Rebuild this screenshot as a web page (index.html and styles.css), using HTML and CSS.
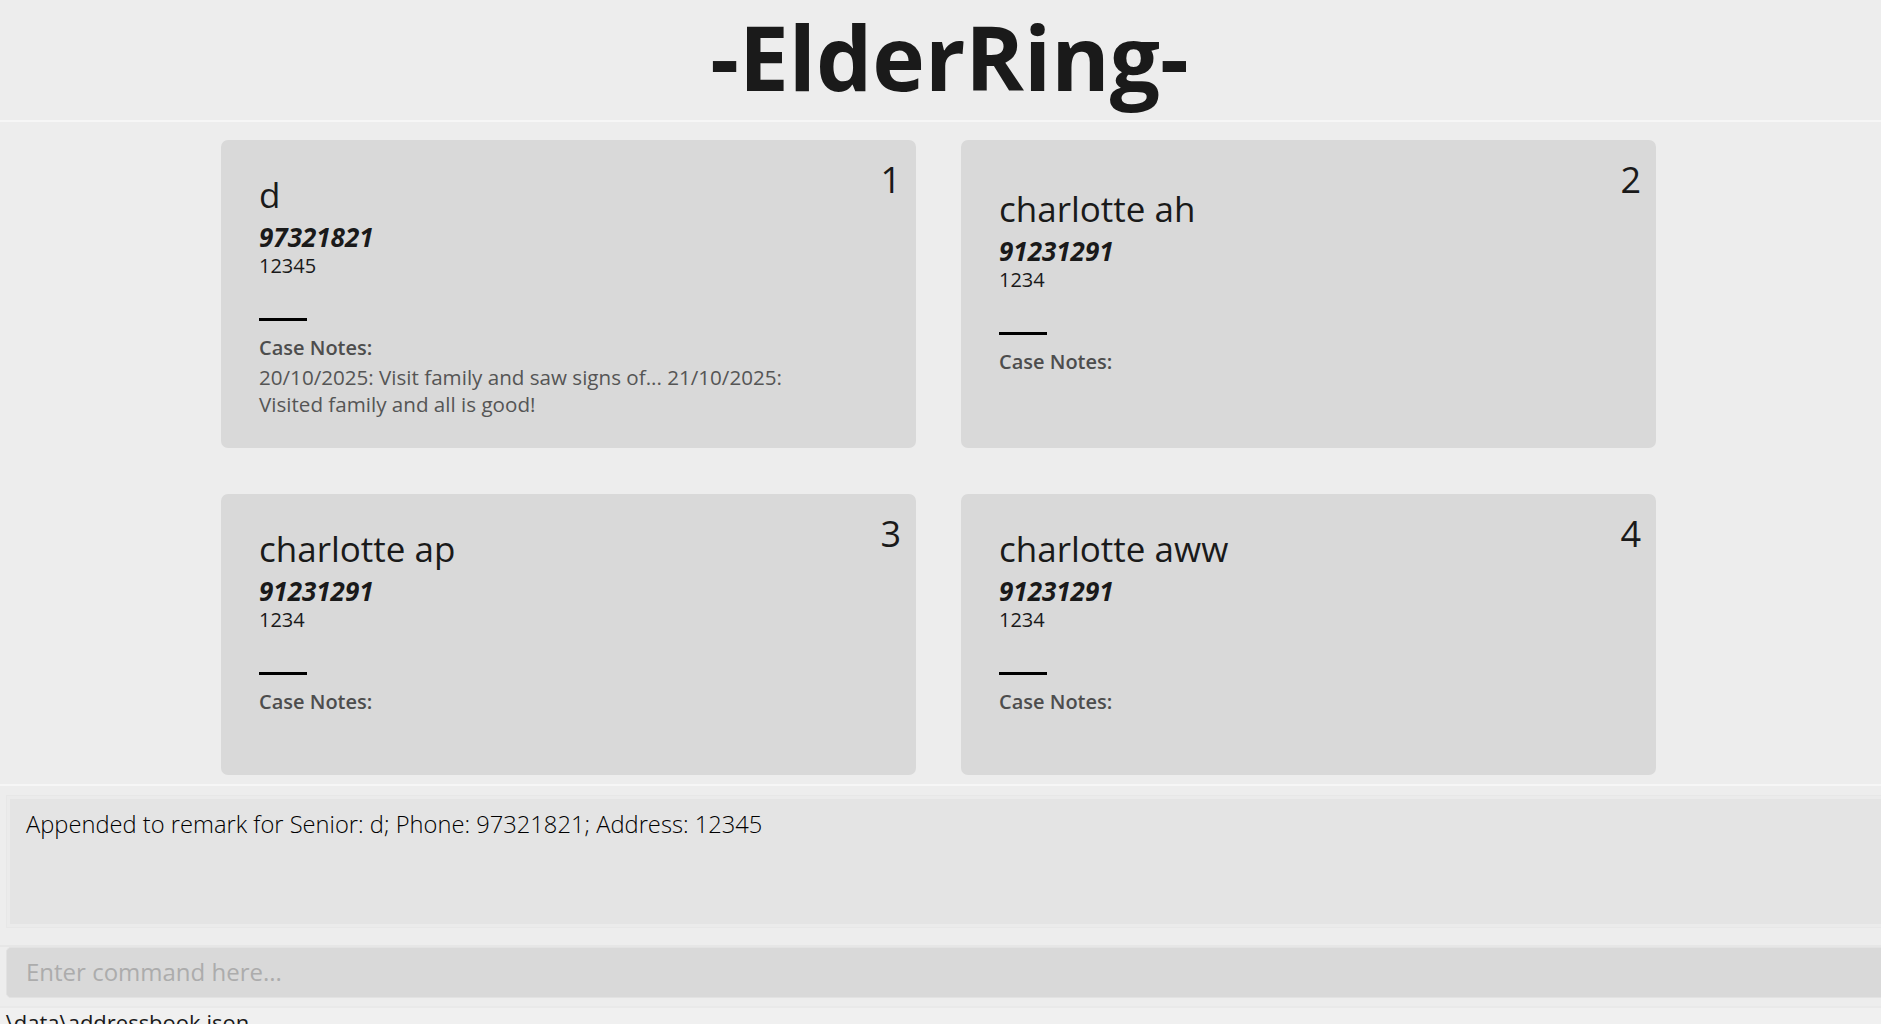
FILE: index.html
```html
<!DOCTYPE html>
<html lang="en">
<head>
<meta charset="utf-8">
<title>ElderRing</title>
<link rel="stylesheet" href="styles.css">
</head>
<body>
<div class="app">
  <header class="header">
    <h1 class="title">-ElderRing-</h1>
  </header>

  <main class="list-pane">
    <div class="grid">
      <article class="card">
        <span class="index">1</span>
        <div class="name">d</div>
        <div class="phone">97321821</div>
        <div class="address">12345</div>
        <div class="rule"></div>
        <div class="notes-label">Case Notes:</div>
        <div class="notes">20/10/2025: Visit family and saw signs of... 21/10/2025: Visited family and all is good!</div>
      </article>
      <article class="card">
        <span class="index">2</span>
        <div class="name">charlotte ah</div>
        <div class="phone">91231291</div>
        <div class="address">1234</div>
        <div class="rule"></div>
        <div class="notes-label">Case Notes:</div>
        <div class="notes"></div>
      </article>
      <article class="card">
        <span class="index">3</span>
        <div class="name">charlotte ap</div>
        <div class="phone">91231291</div>
        <div class="address">1234</div>
        <div class="rule"></div>
        <div class="notes-label">Case Notes:</div>
        <div class="notes"></div>
      </article>
      <article class="card">
        <span class="index">4</span>
        <div class="name">charlotte aww</div>
        <div class="phone">91231291</div>
        <div class="address">1234</div>
        <div class="rule"></div>
        <div class="notes-label">Case Notes:</div>
        <div class="notes"></div>
      </article>
    </div>
  </main>

  <section class="result-pane">
    <div class="result-frame">
      <div class="result-box">Appended to remark for Senior: d; Phone: 97321821; Address: 12345</div>
    </div>
  </section>

  <section class="command-pane">
    <input class="command-input" type="text" placeholder="Enter command here...">
  </section>

  <footer class="status-bar">
    <span class="status-text">.\data\addressbook.json</span>
  </footer>
</div>
</body>
</html>
```

FILE: styles.css
```css
* {
  box-sizing: border-box;
}

html, body {
  margin: 0;
  padding: 0;
  height: 100%;
  overflow: hidden;
  background: #ededed;
}

body {
  font-family: "Open Sans", "Noto Sans", sans-serif;
  color: #1a1a1a;
}

.app {
  display: flex;
  flex-direction: column;
  height: 1024px;
}

.header {
  height: 122px;
  border-bottom: 2px solid #f6f6f6;
  display: flex;
  justify-content: center;
  align-items: flex-start;
  padding-left: 18px;
}

.title {
  margin: 0;
  font-size: 89px;
  font-weight: 700;
  line-height: 114px;
  color: #1a1a1a;
}

.list-pane {
  height: 664px;
  border-bottom: 2px solid #f6f6f6;
  padding-top: 18px;
}

.grid {
  display: grid;
  grid-template-columns: 695px 695px;
  column-gap: 45px;
  row-gap: 46px;
  justify-content: center;
  margin-left: -4px;
}

.card {
  position: relative;
  background: #d9d9d9;
  border-radius: 7px;
  padding: 33px 38px 30px 38px;
  display: flex;
  flex-direction: column;
  justify-content: center;
}

.index {
  position: absolute;
  top: 18px;
  right: 15px;
  font-size: 36px;
  line-height: 44px;
  color: #1a1a1a;
}

.name {
  font-size: 35px;
  line-height: 44px;
  color: #1a1a1a;
}

.phone {
  margin-top: 5px;
  font-size: 26px;
  line-height: 30px;
  font-weight: 700;
  font-style: italic;
  color: #1a1a1a;
}

.address {
  font-size: 20px;
  line-height: 27px;
  font-weight: 400;
  color: #1a1a1a;
}

.rule {
  margin-top: 39px;
  width: 48px;
  height: 3px;
  background: #000;
}

.notes-label {
  margin-top: 13px;
  font-size: 20px;
  line-height: 28px;
  font-weight: 600;
  color: #4d4d4d;
}

.notes {
  margin-top: 2px;
  min-height: 27px;
  max-width: 575px;
  font-size: 20.6px;
  line-height: 27px;
  color: #555;
}

.result-pane {
  padding: 9px 0 0 6px;
  height: 159px;
}

.result-frame {
  border: 1px solid #e7e7e7;
  border-right: none;
  background: #ebebeb;
  padding: 3px 0 3px 3px;
  margin-right: -20px;
}

.result-box {
  height: 125px;
  background: #e4e4e4;
  padding: 10px 16px;
  font-size: 23.7px;
  line-height: 30px;
  font-weight: 300;
  color: #000;
}

.command-pane {
  padding: 0 0 0 6px;
  height: 61px;
  border-top: 2px solid #e6e6e6;
}

.command-input {
  display: block;
  width: calc(100% + 20px);
  height: 51px;
  margin: 0;
  border: 1px solid #e2e2e2;
  border-radius: 5px;
  background: #d9d9d9;
  padding: 0 19px 2px 19px;
  font-family: "Open Sans", "Noto Sans", sans-serif;
  font-size: 24px;
  font-weight: 400;
  color: #1a1a1a;
  outline: none;
}

.command-input::placeholder {
  color: #acacac;
}

.status-bar {
  flex: 1;
  background: #f0f0f0;
  border-top: 2px solid #e9e9e9;
  overflow: hidden;
}

.status-text {
  display: block;
  font-size: 22px;
  line-height: 28px;
  padding-top: 0;
  color: #1a1a1a;
}
```
